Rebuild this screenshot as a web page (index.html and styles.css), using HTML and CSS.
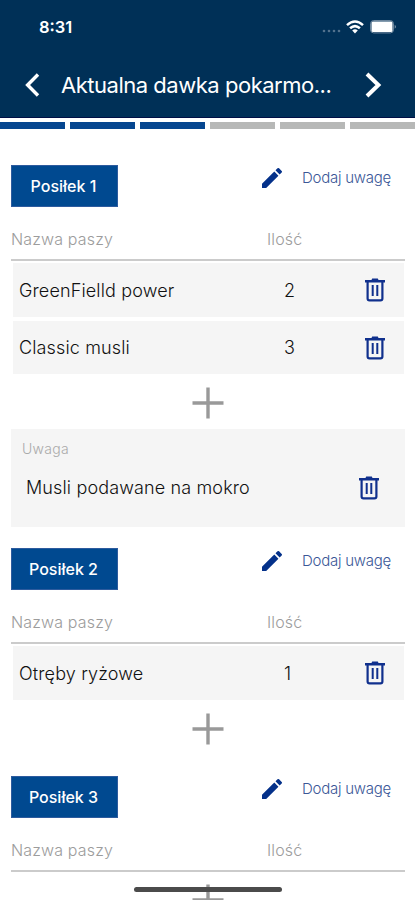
FILE: index.html
```html
<!DOCTYPE html>
<html lang="pl">
<head>
<meta charset="utf-8">
<title>Aktualna dawka pokarmowa</title>
<link rel="stylesheet" href="styles.css">
</head>
<body>
<svg class="defs" width="0" height="0" aria-hidden="true">
  <symbol id="trash" viewBox="0 0 20 24">
    <path d="M2.600 4V20.400Q2.600 22.300 4.500 22.300H15.500Q17.400 22.300 17.400 20.400V4" fill="none" stroke="currentColor" stroke-width="2.200"/>
    <path d="M0 2H6.500L7.200 .6H12.800L13.500 2H20V4.500H0Z" fill="currentColor"/>
    <path d="M7.700 7V18M12.300 7V18" stroke="currentColor" stroke-width="2"/>
  </symbol>
  <symbol id="pencil" viewBox="3 3 18 18">
    <path d="M3 17.250V21h3.750L17.810 9.940l-3.750-3.750L3 17.250zM20.710 7.040a1 1 0 0 0 0-1.410l-2.340-2.340a1 1 0 0 0-1.410 0l-1.830 1.830 3.750 3.750 1.830-1.830z" fill="currentColor"/>
  </symbol>
  <symbol id="plus" viewBox="0 0 32 32">
    <path d="M16 .5V31.500M.5 16H31.500" stroke="currentColor" stroke-width="3.400"/>
  </symbol>
</svg>
<div class="screen">
  <header class="header">
    <div class="status">
      <span class="time">8:31</span>
      <div class="indicators">
        <svg width="19" height="4" viewBox="0 0 19 4" fill="#52718d"><circle cx="2" cy="2" r="1.300"/><circle cx="7" cy="2" r="1.300"/><circle cx="12" cy="2" r="1.300"/><circle cx="17" cy="2" r="1.300"/></svg>
        <svg class="wifi" width="18" height="14" viewBox="0 0 18 14" fill="none" stroke="#fff" stroke-width="2.500"><path d="M1 5.100Q9-2.200 17 5.100"/><path d="M4.100 8.300Q9 3.900 13.900 8.300"/><path d="M6.200 10.500Q9 8.200 11.800 10.500L9 13.500Z" fill="#fff" stroke="none"/></svg>
        <svg class="battery" width="27" height="14" viewBox="0 0 27 14"><rect x=".6" y=".6" width="22.800" height="12.300" rx="3" fill="none" stroke="#7890a5"/><rect x="1.500" y="1.500" width="21" height="10.500" rx="1.500" fill="#fff"/><path d="M24.700 4.800Q27.300 6.700 24.700 8.700Z" fill="#7890a5"/></svg>
      </div>
    </div>
    <div class="nav">
      <svg width="15" height="24" viewBox="0 0 15 24" fill="none" stroke="#fff" stroke-width="3.400"><path d="M13 1.500L2.600 12L13 22.500"/></svg>
      <h1 class="title">Aktualna dawka pokarmo...</h1>
      <svg width="17" height="26" viewBox="0 0 17 26" fill="none" stroke="#fff" stroke-width="4"><path d="M2 2L13.400 13L2 24"/></svg>
    </div>
  </header>
  <div class="progress"><i class="done"></i><i class="done"></i><i class="done"></i><i></i><i></i><i></i></div>
  <main>
    <section class="meal">
      <div class="meal-head"><button class="tag">Posiłek 1</button><a class="add-note"><svg width="20" height="20"><use href="#pencil"/></svg><span>Dodaj uwagę</span></a></div>
      <div class="columns"><span>Nazwa paszy</span><span>Ilość</span></div>
      <div class="rows">
        <div class="row"><span>GreenFielld power</span><span class="qty">2</span><svg width="20" height="24"><use href="#trash"/></svg></div>
        <div class="row"><span>Classic musli</span><span class="qty">3</span><svg width="20" height="24"><use href="#trash"/></svg></div>
      </div>
      <div class="add"><svg width="32" height="32"><use href="#plus"/></svg></div>
      <div class="note"><span class="note-label">Uwaga</span><div class="note-body"><span>Musli podawane na mokro</span><svg width="20" height="24"><use href="#trash"/></svg></div></div>
    </section>
    <section class="meal">
      <div class="meal-head"><button class="tag">Posiłek 2</button><a class="add-note"><svg width="20" height="20"><use href="#pencil"/></svg><span>Dodaj uwagę</span></a></div>
      <div class="columns"><span>Nazwa paszy</span><span>Ilość</span></div>
      <div class="rows">
        <div class="row"><span>Otręby ryżowe</span><span class="qty">1</span><svg width="20" height="24"><use href="#trash"/></svg></div>
      </div>
      <div class="add"><svg width="32" height="32"><use href="#plus"/></svg></div>
    </section>
    <section class="meal">
      <div class="meal-head"><button class="tag">Posiłek 3</button><a class="add-note"><svg width="20" height="20"><use href="#pencil"/></svg><span>Dodaj uwagę</span></a></div>
      <div class="columns"><span>Nazwa paszy</span><span>Ilość</span></div>
      <div class="add last"><svg width="32" height="32"><use href="#plus"/></svg></div>
    </section>
  </main>
  <div class="home-indicator"></div>
</div>
</body>
</html>
```
FILE: styles.css
```css
* { box-sizing: border-box; }
body { margin: 0; font-family: Inter, "Liberation Sans", sans-serif; background: #fff; }
svg { display: block; flex: none; }
.defs { position: absolute; }
.screen { position: relative; width: 415px; height: 900px; overflow: hidden; }
.header { height: 118px; background: #003057; border-bottom: 1px solid #000f45; color: #fff; }
.status { height: 54px; padding: 0 18px 0 39px; display: flex; justify-content: space-between; align-items: center; }
.time { font-size: 16.5px; font-weight: 600; }
.indicators { display: flex; align-items: center; width: 75px; }
.indicators svg:first-child { margin-top: 8px; }
.wifi { margin-left: 5px; }
.battery { margin-left: 6px; }
.nav { height: 62px; padding: 0 32px 0 25px; display: flex; align-items: center; }
.title { margin: 0; padding-left: 21px; width: 325px; font-size: 22px; font-weight: 400; letter-spacing: -.48px; white-space: nowrap; }
.progress { height: 11px; padding-top: 4px; display: grid; grid-template-columns: repeat(6, 1fr); gap: 4.5px; }
.progress i { background: #b7b8b7; }
.progress .done { background: #064690; }
main { padding: 36px 10px 0 11px; }
.meal { margin-bottom: 21px; }
.meal-head { height: 42px; display: flex; justify-content: space-between; padding-right: 3px; }
.tag { width: 107px; height: 42px; padding: 0 2px 0 0; border: 1px solid #2d5b9e; background: #004990; color: #fff; font: 500 16px Inter, sans-serif; }
.add-note { height: 25px; display: flex; align-items: center; color: #3b5797; font-size: 15px; font-weight: 300; letter-spacing: -.25px; width: 140px; white-space: nowrap; }
.add-note svg { color: #04318a; margin-right: 20px; }
.columns { height: 54px; border-bottom: 2px solid #cbcbcb; padding-top: 12px; display: grid; grid-template-columns: 256px 1fr; line-height: 40px; font-size: 16px; font-weight: 300; letter-spacing: .15px; color: #9c9c9c; }
.rows { padding: 2px 1px 0 2px; display: grid; gap: 4px; }
.row { height: 53.5px; background: #f5f5f5; display: grid; grid-template-columns: 247px 1fr 20px; padding: 1px 19px 0 6px; align-items: center; font-size: 18px; font-weight: 300; letter-spacing: .14px; color: #111; }
.qty { padding-left: 18px; }
.add { height: 55px; display: grid; place-items: center; color: #999; padding-top: 3px; }
.rows + .add:last-child { height: 55.5px; }
.last { padding-top: 0; }
.note { height: 98px; background: #f5f5f5; padding: 11px 26px 0 11px; }
.note-label { display: block; height: 18px; line-height: 18px; font-size: 14px; font-weight: 300; letter-spacing: .3px; color: #aaa; }
.note-body { height: 59px; padding-left: 4px; display: flex; align-items: center; justify-content: space-between; font-size: 18px; font-weight: 300; letter-spacing: .14px; color: #111; }
.row svg, .note svg { color: #10308d; }
.home-indicator { position: absolute; left: 134px; top: 887px; width: 148px; height: 5px; border-radius: 3px; background: #4b4b4b; }
```
